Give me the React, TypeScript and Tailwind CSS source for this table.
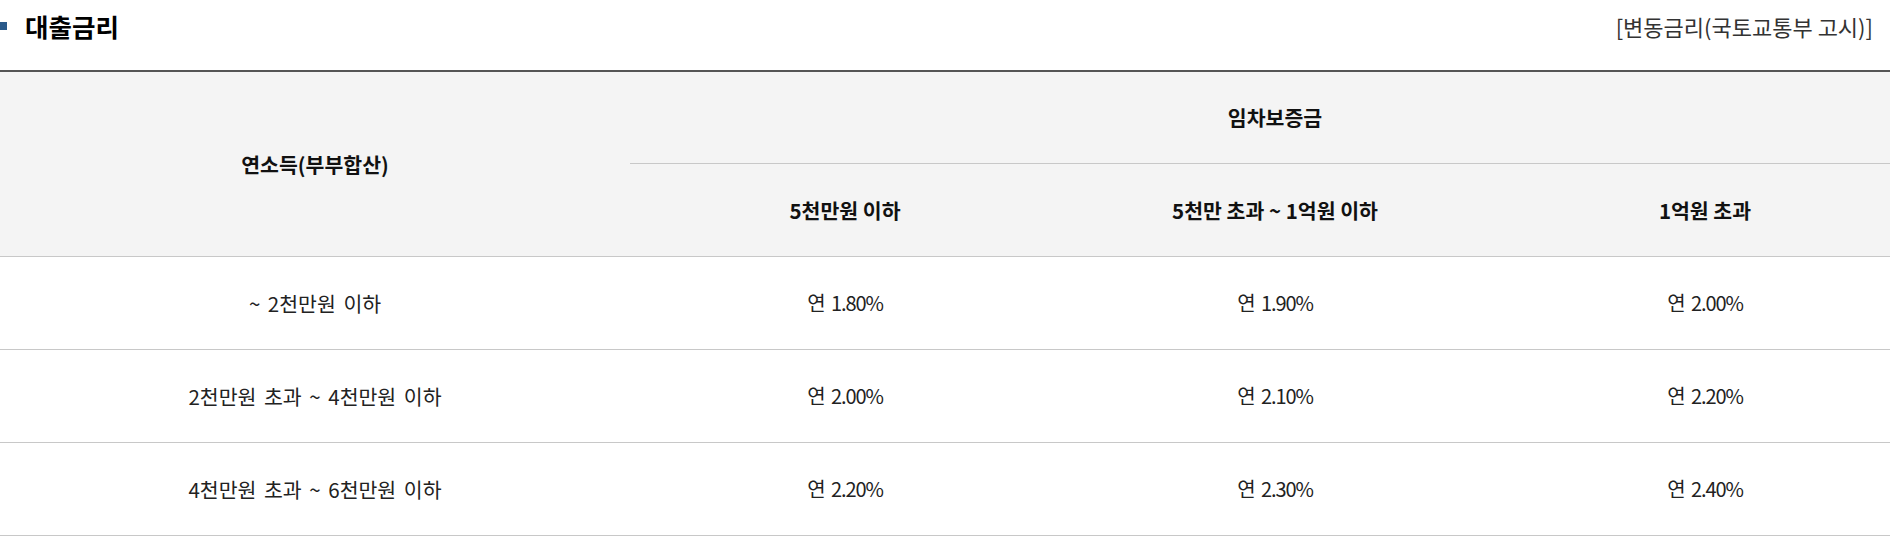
import React from 'react';

const font = { fontFamily: '"Noto Sans CJK KR", "Noto Sans", sans-serif' };

const deposits = ['5천만원 이하', '5천만 초과 ~ 1억원 이하', '1억원 초과'];

const rows: { income: string; rates: string[] }[] = [
  { income: '~ 2천만원 이하', rates: ['연 1.80%', '연 1.90%', '연 2.00%'] },
  { income: '2천만원 초과 ~ 4천만원 이하', rates: ['연 2.00%', '연 2.10%', '연 2.20%'] },
  { income: '4천만원 초과 ~ 6천만원 이하', rates: ['연 2.20%', '연 2.30%', '연 2.40%'] }
];

export default function App() {
  return (
    <div className="h-[550px] w-[1890px] overflow-hidden bg-white text-[#111]" style={font}>
      <div className="flex h-[52px] items-center justify-between pr-[17px]">
        <div className="flex items-center">
          <span className="mr-[18px] h-[8px] w-[7px] bg-[#2a5a8a]" />
          <h2 className="text-[25.5px] font-bold leading-none text-black">대출금리</h2>
        </div>
        <span className="text-[22px] leading-none text-[#333]">[변동금리(국토교통부 고시)]</span>
      </div>

      <div className="mt-[18px] grid w-[1920px] grid-cols-[630px_430px_430px_430px] border-t-2 border-[#555]">
        <div className="row-span-2 flex items-center justify-center border-b border-[#c8c8c8] bg-[#f4f4f4] text-[20.5px] font-bold">
          연소득(부부합산)
        </div>
        <div className="col-span-3 flex h-[92px] items-center justify-center border-b border-[#c8c8c8] bg-[#f4f4f4] text-[20.5px] font-bold">
          임차보증금
        </div>
        {deposits.map((d) => (
          <div
            key={d}
            className="flex h-[93px] items-center justify-center border-b border-[#c8c8c8] bg-[#f4f4f4] text-[20.5px] font-bold"
          >
            {d}
          </div>
        ))}

        {rows.map((r) => (
          <React.Fragment key={r.income}>
            <div className="flex h-[93px] items-center justify-center border-b border-[#c8c8c8] text-[20.5px] text-[#222] [word-spacing:3px]">
              {r.income}
            </div>
            {r.rates.map((rate, i) => (
              <div
                key={i}
                className="flex h-[93px] items-center justify-center border-b border-[#c8c8c8] text-[20px] tracking-[-1.1px] text-[#222] [word-spacing:3px]"
              >
                {rate}
              </div>
            ))}
          </React.Fragment>
        ))}
      </div>
    </div>
  );
}
